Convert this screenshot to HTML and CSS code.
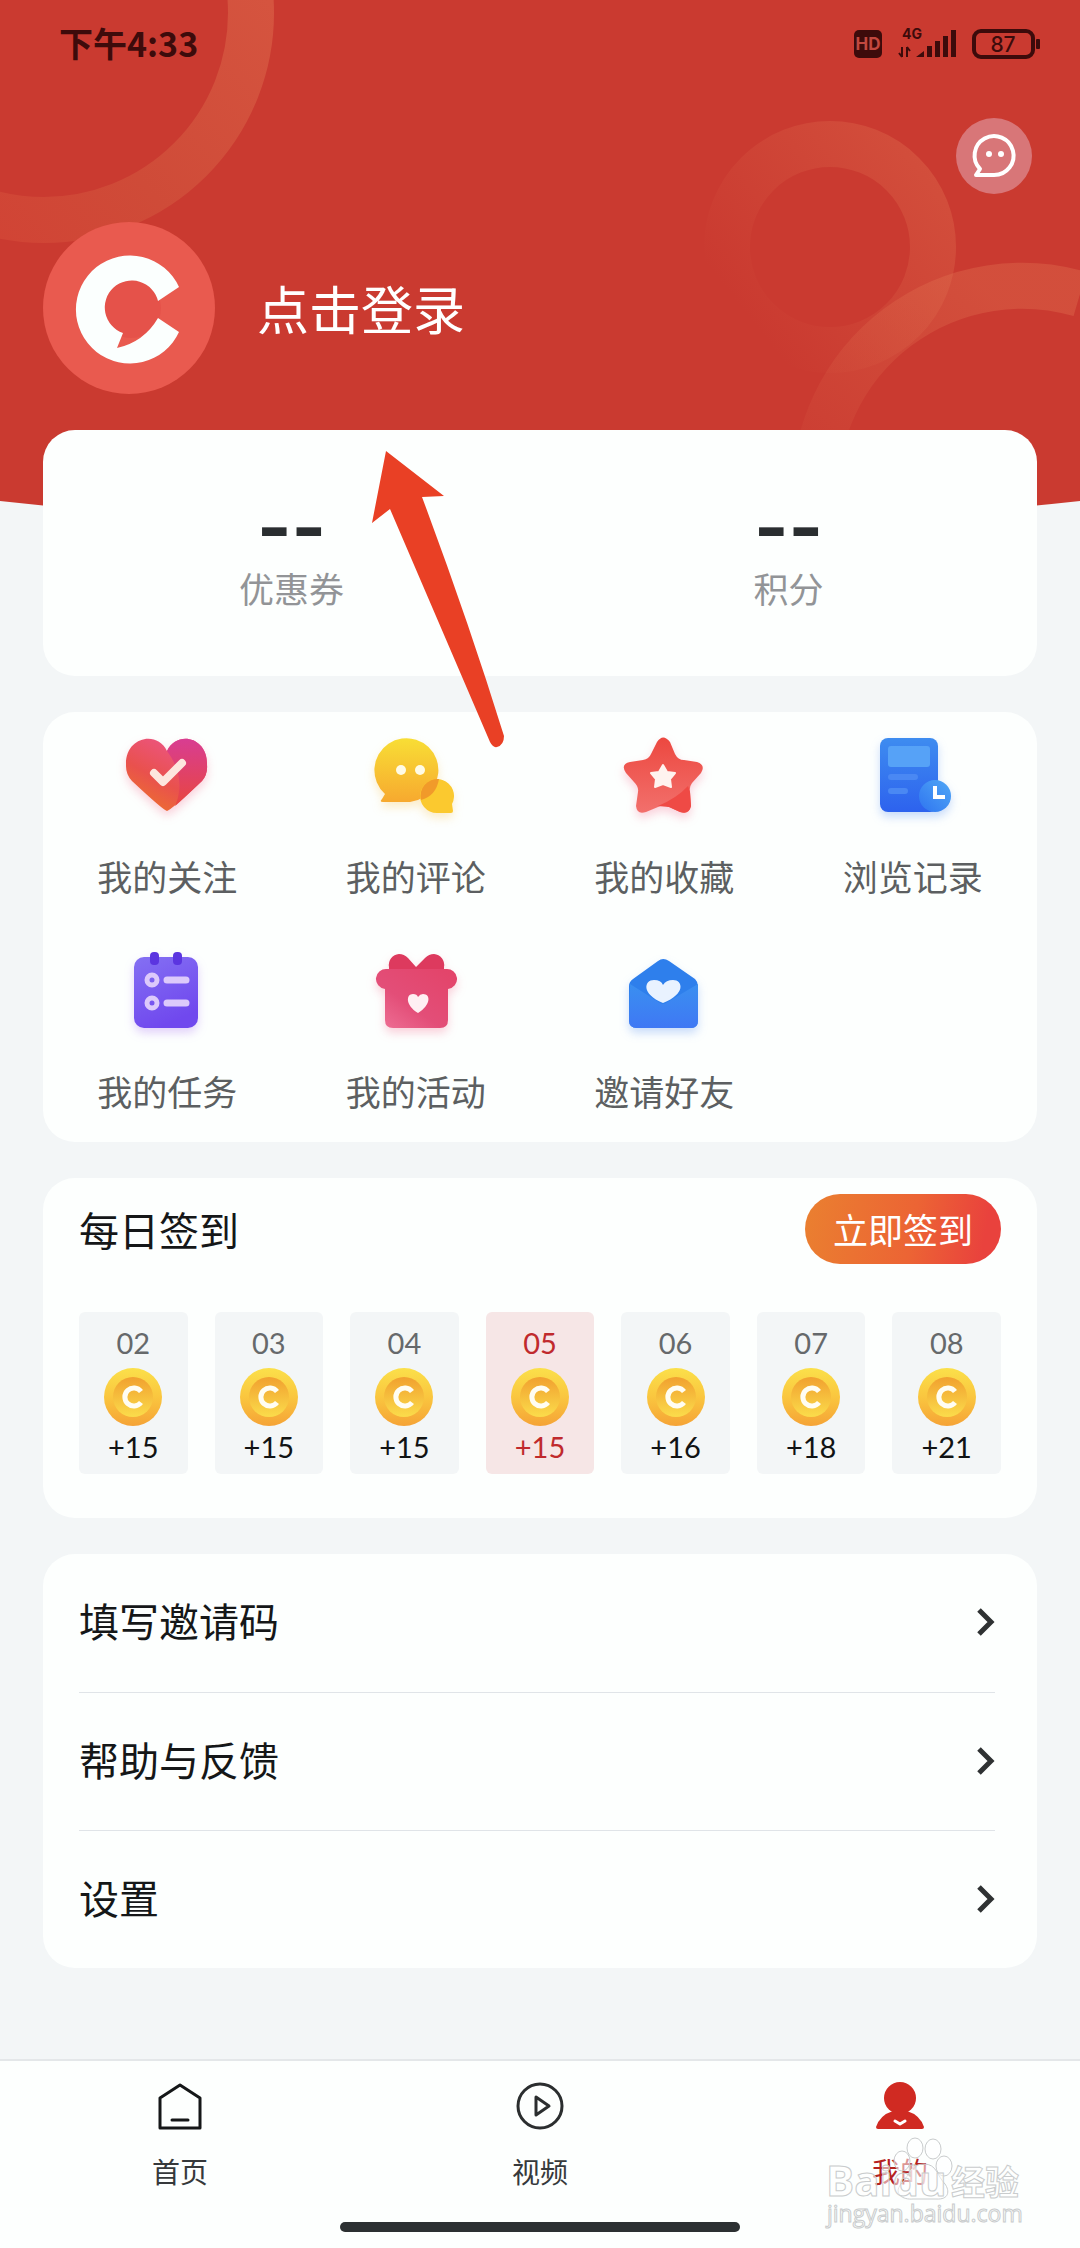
FILE: index.html
```html
<!DOCTYPE html>
<html lang="zh-CN">
<head>
<meta charset="utf-8">
<meta name="viewport" content="width=device-width, initial-scale=1">
<title>我的</title>
<link rel="stylesheet" href="styles.css">
</head>
<body>
<div class="page">
  <svg class="backdrop" viewBox="0 0 1080 560" aria-hidden="true">
    <defs>
      <clipPath id="hero"><path d="M0 0H1080V501Q540 560 0 501Z"/></clipPath>
      <linearGradient id="ringA" gradientUnits="userSpaceOnUse" x1="270" y1="0" x2="0" y2="240"><stop offset="0" stop-color="#d5543f"/><stop offset=".6" stop-color="#cf4b38"/><stop offset="1" stop-color="#d14435"/></linearGradient>
      <linearGradient id="ringB" gradientUnits="userSpaceOnUse" x1="940" y1="170" x2="750" y2="320"><stop offset="0" stop-color="#e57a55" stop-opacity=".32"/><stop offset="1" stop-color="#e57a55" stop-opacity="0"/></linearGradient>
      <linearGradient id="ringC" gradientUnits="userSpaceOnUse" x1="960" y1="270" x2="810" y2="440"><stop offset="0" stop-color="#e57a55" stop-opacity=".32"/><stop offset="1" stop-color="#e57a55" stop-opacity=".08"/></linearGradient>
    </defs>
    <g clip-path="url(#hero)" fill="none" stroke-width="46">
      <path d="M0 0H1080V560H0Z" fill="#ca3a30"/>
      <circle cx="44" cy="13" r="207" stroke="url(#ringA)"/>
      <circle cx="830" cy="247" r="103" stroke="url(#ringB)"/>
      <path d="M815 493A207 207 0 0 1 1080 294" stroke="url(#ringC)"/>
    </g>
  </svg>

  <header class="hero">
    <div class="status">
      <span class="clock">下午4:33</span>
      <svg class="status-icons" width="188" height="40" viewBox="0 0 188 40" aria-label="HD 4G 87%">
        <g fill="#3d0b0b" font-family="Inter, sans-serif">
          <rect x="1" y="7" width="28" height="28" rx="5"/>
          <text x="15" y="27" font-size="17" font-weight="700" text-anchor="middle" fill="#c2483f">HD</text>
          <text x="49" y="16" font-size="14" font-weight="700">4G</text>
          <path d="M49 24v10M49 34l-3-4M54 34V24M54 24l3 4" stroke="#3d0b0b" stroke-width="2" fill="none"/>
          <path d="M63 34l8-6v6zM74 23h5v11h-5zM82 18h5v16h-5zM90 13h5v21h-5zM98 7h5v27h-5z"/>
          <rect x="121" y="8" width="59" height="26" rx="7" fill="none" stroke="#3d0b0b" stroke-width="4"/>
          <rect x="183" y="16" width="4" height="10" rx="1"/>
          <text x="150" y="29" font-size="21" font-weight="500" text-anchor="middle">87</text>
        </g>
      </svg>
    </div>
    <div class="tools">
      <button class="message" type="button" aria-label="消息">
        <svg width="76" height="76" viewBox="0 0 76 76"><path d="M38 57H20l4-6A19.500 19.500 0 1 1 38 57Z" fill="none" stroke="#fff" stroke-width="4" stroke-linejoin="round"/><circle cx="33" cy="36" r="3" fill="#fff"/><circle cx="45" cy="36" r="3" fill="#fff"/></svg>
      </button>
    </div>
    <a class="profile" href="#login">
      <svg width="172" height="172" viewBox="0 0 172 172" aria-hidden="true"><circle cx="86" cy="86" r="86" fill="#e95a4f"/><circle cx="88" cy="86" r="30" fill="#e5524a"/><path d="M136 65A54 54 0 1 0 136 110L115 96Q101 120 74 126L80 111A27 27 0 1 1 115 79Z" fill="#fbfffe"/></svg>
      <span>点击登录</span>
    </a>
  </header>

  <main class="cards">
    <section class="card stats">
      <a class="stat" href="#coupons"><strong>--</strong><span>优惠券</span></a>
      <a class="stat" href="#points"><strong>--</strong><span>积分</span></a>
    </section>

    <nav class="card menu" aria-label="我的服务">
      <a href="#follow">
        <svg class="icon glow-red" viewBox="0 0 96 96"><defs><linearGradient id="h1" x1="0" y1="1" x2=".6" y2="0"><stop offset="0" stop-color="#ee7a24"/><stop offset=".5" stop-color="#e9514d"/><stop offset="1" stop-color="#ec5585"/></linearGradient><linearGradient id="h2" x1="0" y1="0" x2="0" y2="1"><stop offset="0" stop-color="#d83d92"/><stop offset="1" stop-color="#e8463f"/></linearGradient></defs><path d="M48 83Q44 82 13 53A22 22 0 0 1 7 37C6 9 38 2 48 23C58 2 89 9 88 37A22 22 0 0 1 83 53Q52 82 48 83Z" fill="url(#h1)"/><path d="M48 23C58 2 89 9 88 37A22 22 0 0 1 83 53Q60 75 56 78Q68 50 48 23Z" fill="url(#h2)"/><path d="M35 45L44 54L63 35" fill="none" stroke="#fde6de" stroke-width="8" stroke-linecap="round" stroke-linejoin="round"/></svg>
        <span>我的关注</span>
      </a>
      <a href="#comments">
        <svg class="icon glow-yellow" viewBox="0 0 96 96"><defs><linearGradient id="c1" x1=".5" y1="0" x2=".5" y2="1"><stop offset="0" stop-color="#f8de35"/><stop offset="1" stop-color="#f7a92f"/></linearGradient></defs><path d="M42 74H15Q11 74 14 71L17 66A32 32 0 1 1 42 74Z" fill="url(#c1)"/><path d="M69 85A17 17 0 1 1 84 76L85 83Q85 85 83 85Z" fill="#fbc92f"/><path d="M71 51A17 17 0 0 0 53 72Q68 68 71 51Z" fill="#f19a2a"/><circle cx="33" cy="42" r="5" fill="#fffbe5"/><circle cx="52" cy="42" r="5" fill="#fffbe5"/></svg>
        <span>我的评论</span>
      </a>
      <a href="#favorites">
        <svg class="icon glow-red" viewBox="0 0 96 96"><defs><linearGradient id="s1" x1="0" y1="0" x2="0" y2="1"><stop offset="0" stop-color="#ec4840"/><stop offset="1" stop-color="#f2706c"/></linearGradient></defs><path d="M41 14Q47 5 54 14L59 26Q62 32 68 32L81 34Q90 37 85 45L76 55Q73 59 74 64L75 78Q73 87 64 84L53 79Q47 76 42 79L30 84Q21 87 20 78L22 64Q23 59 18 54L10 45Q4 36 14 34L27 32Q33 31 35 26Z" fill="url(#s1)"/><path d="M72 58Q73 61 74 64L75 78Q73 87 64 84L53 79L42 78Q61 70 72 58Z" fill="#ef4a45"/><path d="M47 37L51 44L59 45L54 51L55 59L47 56L39 59L40 51L35 45L43 44Z" fill="#fff3ef" stroke="#fff3ef" stroke-width="2" stroke-linejoin="round"/></svg>
        <span>我的收藏</span>
      </a>
      <a href="#history">
        <svg class="icon glow-blue" viewBox="0 0 96 96"><defs><linearGradient id="d1" x1="0" y1="0" x2="0" y2="1"><stop offset="0" stop-color="#3e8cf0"/><stop offset="1" stop-color="#2d62ee"/></linearGradient><linearGradient id="d2" x1="0" y1="1" x2="1" y2="0"><stop offset="0" stop-color="#2f74f0"/><stop offset="1" stop-color="#50a8f6"/></linearGradient></defs><rect x="15" y="10" width="58" height="74" rx="8" fill="url(#d1)"/><rect x="23" y="18" width="42" height="21" rx="3" fill="#56a2f7"/><path d="M26 49H50M26 63H40" stroke="#4a88f3" stroke-width="6" stroke-linecap="round"/><circle cx="70" cy="68" r="16" fill="url(#d2)"/><path d="M70 58V69H80" fill="none" stroke="#fff" stroke-width="4"/></svg>
        <span>浏览记录</span>
      </a>
      <a href="#tasks">
        <svg class="icon glow-purple" viewBox="0 0 96 96"><defs><linearGradient id="t1" x1="0" y1="0" x2=".4" y2="1"><stop offset="0" stop-color="#8470f3"/><stop offset="1" stop-color="#7048ee"/></linearGradient></defs><rect x="15" y="14" width="64" height="71" rx="10" fill="url(#t1)"/><rect x="31" y="9" width="9" height="13" rx="4" fill="#5b35e0"/><rect x="54" y="9" width="9" height="13" rx="4" fill="#5b35e0"/><g fill="none" stroke="#dcc9fb"><circle cx="33" cy="37" r="5" stroke-width="5"/><circle cx="33" cy="60" r="5" stroke-width="5"/><path d="M48 37H67M48 60H67" stroke-width="7" stroke-linecap="round"/></g></svg>
        <span>我的任务</span>
      </a>
      <a href="#events">
        <svg class="icon glow-red" viewBox="0 0 96 96"><defs><linearGradient id="g1" x1="1" y1="0" x2="0" y2="1"><stop offset="0" stop-color="#e34368"/><stop offset=".6" stop-color="#e34e78"/><stop offset="1" stop-color="#ef7297"/></linearGradient></defs><path d="M48 24L40 15Q36 11 31 11A11 11 0 0 0 21 24V34H76V24A11 11 0 0 0 66 11Q61 11 57 15Z" fill="#dd3a5e"/><path d="M19 26H78A10 10 0 0 1 80 46V77Q80 85 72 85H25Q17 85 17 77V46A10 10 0 0 1 19 26Z" fill="url(#g1)"/><path d="M50 70C37 62 38 51 45 51Q49 51 50 54Q52 51 55 51C63 51 63 62 50 70Z" fill="#fff0f3"/></svg>
        <span>我的活动</span>
      </a>
      <a href="#invite">
        <svg class="icon glow-blue" viewBox="0 0 96 96"><defs><linearGradient id="e1" x1="0" y1="0" x2="0" y2="1"><stop offset="0" stop-color="#3a8ff0"/><stop offset="1" stop-color="#3f78f4"/></linearGradient></defs><path d="M42 18Q47 14 53 18L79 36Q82 39 82 43V77Q82 85 75 85H21Q13 85 13 77V43Q13 39 17 36Z" fill="#2e7fec"/><path d="M47 60C25 51 28 37 38 37Q45 37 47 42Q50 37 57 37C67 37 70 51 47 60Z" fill="#e9f2ff"/><path d="M14 41L44 60Q47 62 50 60L82 41V77Q82 85 75 85H21Q13 85 13 77Z" fill="url(#e1)"/></svg>
        <span>邀请好友</span>
      </a>
    </nav>

    <section class="card signin">
      <div class="signin-head">
        <h2>每日签到</h2>
        <button class="signin-button" type="button">立即签到</button>
      </div>
      <svg class="symbols" aria-hidden="true"><defs>
        <linearGradient id="k1" x1="0" y1="0" x2="0" y2="1"><stop offset="0" stop-color="#fbe04a"/><stop offset=".5" stop-color="#fac63f"/><stop offset="1" stop-color="#f5a336"/></linearGradient>
        <linearGradient id="k2" x1="0" y1="0" x2="0" y2="1"><stop offset="0" stop-color="#f1a02f"/><stop offset="1" stop-color="#fbdc4b"/></linearGradient>
        <symbol id="coin" viewBox="0 0 58 58"><circle cx="29" cy="29" r="29" fill="url(#k1)"/><circle cx="29" cy="29" r="20" fill="url(#k2)"/><path d="M37 23.500A9 9 0 1 0 37 34.500" fill="none" stroke="#fffdf2" stroke-width="5"/></symbol>
      </defs></svg>
      <ol class="days">
        <li><span>02</span><svg><use href="#coin"/></svg><b>+15</b></li>
        <li><span>03</span><svg><use href="#coin"/></svg><b>+15</b></li>
        <li><span>04</span><svg><use href="#coin"/></svg><b>+15</b></li>
        <li class="today"><span>05</span><svg><use href="#coin"/></svg><b>+15</b></li>
        <li><span>06</span><svg><use href="#coin"/></svg><b>+16</b></li>
        <li><span>07</span><svg><use href="#coin"/></svg><b>+18</b></li>
        <li><span>08</span><svg><use href="#coin"/></svg><b>+21</b></li>
      </ol>
    </section>

    <nav class="card links" aria-label="更多">
      <a href="#code"><span>填写邀请码</span><svg width="18" height="28" viewBox="0 0 18 28"><path d="M2 2L14 14L2 26"/></svg></a>
      <a href="#help"><span>帮助与反馈</span><svg width="18" height="28" viewBox="0 0 18 28"><path d="M2 2L14 14L2 26"/></svg></a>
      <a href="#settings"><span>设置</span><svg width="18" height="28" viewBox="0 0 18 28"><path d="M2 2L14 14L2 26"/></svg></a>
    </nav>
  </main>

  <footer class="tabbar">
    <nav class="tabs" aria-label="主导航">
      <a href="#home"><svg viewBox="0 0 56 56"><path d="M8 19L28 6L48 19V49H8ZM20 41H36" fill="none" stroke="#151718" stroke-width="3" stroke-linejoin="round" stroke-linecap="round"/></svg><span>首页</span></a>
      <a href="#video"><svg viewBox="0 0 56 56"><g fill="none" stroke="#2b2e2f" stroke-width="3" stroke-linejoin="round"><circle cx="28" cy="27" r="22"/><path d="M24 18V36L37 27Z"/></g></svg><span>视频</span></a>
      <a class="active" href="#me" aria-current="page"><svg viewBox="0 0 56 56"><circle cx="28" cy="19" r="16" fill="#d02a22"/><path d="M21 32H35Q48 36 52 48Q52 50 50 50H6Q4 50 4 48Q8 36 21 32Z" fill="#d02a22"/><path d="M23 42L28 45L33 42" fill="none" stroke="#fff" stroke-width="3" stroke-linecap="round" stroke-linejoin="round"/></svg><span>我的</span></a>
    </nav>
    <div class="home-bar"></div>
    <svg class="watermark" width="204" height="104" viewBox="0 0 204 104" aria-hidden="true">
      <g class="watermark-ink">
        <ellipse cx="79" cy="27" rx="8" ry="10"/><ellipse cx="92" cy="14" rx="8" ry="10"/><ellipse cx="110" cy="15" rx="8" ry="10"/><ellipse cx="121" cy="32" rx="8" ry="10"/>
        <path d="M101 30C86 30 87 42 78 50C70 60 80 66 90 65H113C126 66 127 57 122 50C114 42 114 30 101 30Z"/>
        <text class="brand" x="3" y="62">Baidu</text>
        <text class="brand-cn" x="128" y="61">经验</text>
        <text class="address" x="4" y="88">jingyan.baidu.com</text>
      </g>
    </svg>
  </footer>

  <svg class="pointer" width="140" height="304" viewBox="0 0 140 304" aria-hidden="true"><path d="M16 3L74 48L52 49Q98 172 134 288Q134 297 127 299Q123 300 120 294L20 61L2 75Z" fill="#e94025"/></svg>
</div>
</body>
</html>
```

FILE: styles.css
```css
* {
  box-sizing: border-box;
}

body {
  margin: 0;
  background: #f3f6f7;
  color: #151718;
  font-family: "Noto Sans CJK SC", sans-serif;
}

a {
  color: inherit;
  text-decoration: none;
}

button {
  border: 0;
  padding: 0;
  font: inherit;
}

svg {
  display: block;
}

.page {
  position: relative;
  display: flex;
  flex-direction: column;
  min-height: 100vh;
}

.backdrop {
  position: absolute;
  top: 0;
  left: 0;
  width: 100%;
}

.hero {
  position: relative;
  color: #fff;
}

.status {
  display: flex;
  align-items: center;
  justify-content: space-between;
  height: 86px;
  padding: 0 39px 0 59px;
  color: #3d0b0b;
}

.clock {
  font-size: 34px;
  font-weight: 700;
  line-height: 48px;
}

.tools {
  display: flex;
  justify-content: flex-end;
  padding: 32px 48px 28px;
}

.message {
  width: 76px;
  height: 76px;
  border-radius: 50%;
  background: #d87678;
}

.profile {
  display: flex;
  align-items: center;
  gap: 42px;
  margin: 0 43px 36px;
  font-size: 52px;
  line-height: 76px;
}

.cards {
  position: relative;
  display: flex;
  flex-direction: column;
  gap: 36px;
  margin: 0 43px 36px;
}

.card {
  border-radius: 32px;
  background: #fdfffe;
}

.stats {
  display: grid;
  grid-template-columns: 1fr 1fr;
  padding: 68px 0 64px;
}

.stat {
  display: flex;
  flex-direction: column;
  align-items: center;
  gap: 8px;
  color: #929497;
  font-size: 35px;
  line-height: 48px;
}

.stat strong {
  color: #2a2e30;
  font-family: Inter, sans-serif;
  font-size: 74px;
  line-height: 58px;
}

.menu {
  display: grid;
  grid-template-columns: repeat(4, 1fr);
}

.menu a {
  display: flex;
  flex-direction: column;
  align-items: center;
  gap: 28px;
  padding: 16px 0 27px;
  color: #5c5f61;
  font-size: 35px;
  line-height: 48px;
}

.icon {
  width: 96px;
  height: 96px;
}

.glow-red {
  filter: drop-shadow(0 5px 5px #f4527a44);
}

.glow-yellow {
  filter: drop-shadow(0 5px 5px #f8b83a44);
}

.glow-blue {
  filter: drop-shadow(0 5px 5px #3c7cf044);
}

.glow-purple {
  filter: drop-shadow(0 5px 5px #9a55f044);
}

.signin {
  padding: 16px 36px 44px;
}

.signin-head {
  display: flex;
  align-items: center;
  justify-content: space-between;
  margin-bottom: 48px;
}

.signin-head h2 {
  margin: 0;
  font-size: 40px;
  font-weight: 400;
  line-height: 56px;
}

.signin-button {
  width: 196px;
  height: 70px;
  border-radius: 35px;
  background: linear-gradient(100deg, #ea8030, #ec6434 55%, #e9423d 90%);
  color: #fff;
  font-size: 35px;
  line-height: 48px;
}

.symbols {
  position: absolute;
  width: 0;
  height: 0;
}

.days {
  display: grid;
  grid-template-columns: repeat(7, 1fr);
  gap: 27px;
  margin: 0;
  padding: 0;
  list-style: none;
}

.days li {
  display: flex;
  flex-direction: column;
  align-items: center;
  padding: 14px 0 10px;
  border-radius: 6px;
  background: #f3f6f7;
  color: #111314;
  font-family: Lato, sans-serif;
  font-size: 29px;
  line-height: 34px;
}

.days span {
  color: #66696b;
}

.days svg {
  width: 58px;
  height: 58px;
  margin: 8px 0 4px;
}

.days b {
  font-weight: 400;
}

.days .today {
  background: #f6e6e6;
  color: #c02a2d;
}

.days .today span {
  color: inherit;
}

.links a {
  display: flex;
  align-items: center;
  justify-content: space-between;
  height: 138px;
  margin: 0 42px 0 36px;
  padding-bottom: 2px;
  font-size: 40px;
  line-height: 56px;
}

.links span {
  padding-bottom: 4px;
}

.links a + a {
  border-top: 1px solid #e0e4e8;
}

.links svg {
  fill: none;
  stroke: #2f3233;
  stroke-width: 5px;
}

.tabbar {
  position: relative;
  margin-top: auto;
  padding-bottom: 16px;
  border-top: 2px solid #e4e7e9;
  background: #fdfffe;
}

.tabs {
  display: grid;
  grid-template-columns: repeat(3, 1fr);
}

.tabs a {
  display: flex;
  flex-direction: column;
  align-items: center;
  gap: 18px;
  padding: 18px 0 33px;
  color: #36393b;
  font-size: 28px;
  line-height: 36px;
}

.tabs svg {
  width: 56px;
  height: 56px;
}

.tabs .active {
  color: #b5221f;
}

.home-bar {
  width: 400px;
  height: 10px;
  margin: 0 auto;
  border-radius: 5px;
  background: #2c3032;
}

.watermark {
  position: absolute;
  right: 53px;
  bottom: 10px;
}

.watermark-ink {
  fill: #ffffff88;
  stroke: #c9cccd;
  stroke-width: 1px;
  font-family: "Open Sans", "Noto Sans CJK SC", sans-serif;
}

.brand {
  font-size: 42px;
  font-weight: 700;
}

.brand-cn {
  font-family: "Noto Sans CJK SC", sans-serif;
  font-size: 34px;
  font-weight: 700;
}

.address {
  font-size: 23px;
}

.pointer {
  position: absolute;
  top: 448px;
  left: 370px;
}
```
